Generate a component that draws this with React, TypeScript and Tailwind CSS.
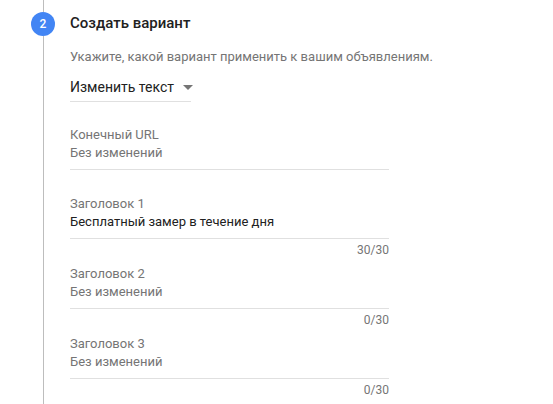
const fields = [
  { label: "Заголовок 1", value: "Бесплатный замер в течение дня", filled: true, count: "30/30" },
  { label: "Заголовок 2", value: "Без изменений", filled: false, count: "0/30" },
  { label: "Заголовок 3", value: "Без изменений", filled: false, count: "0/30" },
];

function Field({ label, value, filled, count }: { label: string; value: string; filled: boolean; count?: string }) {
  return (
    <div className="w-[319px]">
      <div className="border-b border-[#e0e0e0] pb-[7px]">
        <div className="text-[13px] leading-[18px] text-[#757575]">{label}</div>
        <div className={"text-[13px] leading-[18px] " + (filled ? "text-[#212121]" : "text-[#757575]")}>
          {value}
        </div>
      </div>
      {count && <div className="mt-[3px] text-right text-[12px] leading-4 text-[#757575]">{count}</div>}
    </div>
  );
}

export default function App() {
  return (
    <main className="h-[404px] w-[553px] overflow-hidden bg-white font-['Roboto',sans-serif]">
      <div className="flex h-full">
        <div className="ml-[31px] flex w-6 shrink-0 flex-col items-center">
          <div className="h-[12px] w-px bg-[#bdbdbd]" />
          <div className="flex h-6 w-6 items-center justify-center rounded-full bg-[#4285f4] text-[12px] font-medium text-white">
            2
          </div>
          <div className="w-px flex-1 bg-[#bdbdbd]" />
        </div>
        <div className="ml-[15px] flex min-w-0 flex-col pt-[13px]">
          <h2 className="text-[15px] leading-5 font-medium text-[#212121]">Создать вариант</h2>
          <p className="mt-[14px] whitespace-nowrap text-[13px] leading-5 text-[#757575]">
            Укажите, какой вариант применить к вашим объявлениям.
          </p>
          <div className="mt-[10px] flex w-[121px] items-center gap-[9px] whitespace-nowrap border-b border-[#e0e0e0] pb-1">
            <span className="text-[14px] leading-5 text-[#212121]">Изменить текст</span>
            <svg width="10" height="5" viewBox="0 0 10 5" className="shrink-0">
              <path d="M0 0h10L5 5z" fill="#757575" />
            </svg>
          </div>
          <div className="mt-6 flex flex-col gap-[25px]">
            <Field label="Конечный URL" value="Без изменений" filled={false} />
            <div className="flex flex-col gap-[7px]">
              {fields.map((f) => (
                <Field key={f.label} {...f} />
              ))}
            </div>
          </div>
        </div>
      </div>
    </main>
  );
}
